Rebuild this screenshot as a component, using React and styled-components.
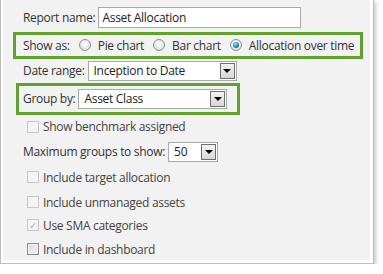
import React from 'react'
import styled, { createGlobalStyle } from 'styled-components'

const Global = createGlobalStyle`
  html, body {
    margin: 0;
    padding: 0;
    background: #ffffff;
  }
  body {
    font-family: 'Open Sans', 'Noto Sans', sans-serif;
    font-size: 12px;
    letter-spacing: -0.3px;
    color: #333333;
  }
`

const Panel = styled.div`
  width: 374px;
  border: 1px solid #bdbdbd;
  border-top: none;
  background: #ffffff;
  padding: 0 3px 3px 2px;
  box-sizing: border-box;
  box-shadow: 2px 2px 4px rgba(0, 0, 0, 0.22);
`

const Inner = styled.div`
  background: #f2f2f2;
  height: 260px;
  padding: 7px 0 0 0;
  box-sizing: border-box;
  display: flex;
  flex-direction: column;
`

const Row = styled.div`
  display: flex;
  align-items: center;
  height: ${(p) => p.$h || 22}px;
  padding-left: ${(p) => p.$indent || 20}px;
  margin-top: ${(p) => p.$mt || 0}px;
  gap: ${(p) => p.$gap ?? 3}px;
`

const Highlight = styled.div`
  display: flex;
  align-items: center;
  border: 3px solid #61a22d;
  height: ${(p) => p.$h}px;
  width: ${(p) => p.$w}px;
  margin-left: ${(p) => p.$ml}px;
  margin-top: ${(p) => p.$mt || 0}px;
  padding-left: ${(p) => p.$pl}px;
  box-sizing: border-box;
  gap: 3px;
`

const Label = styled.span`
  white-space: nowrap;
  color: ${(p) => (p.$muted ? '#444' : '#333')};
`

const TextInput = styled.div`
  width: ${(p) => p.$w}px;
  height: 21px;
  border: 1px solid #a9a9a9;
  background: #fff;
  box-sizing: border-box;
  display: flex;
  align-items: center;
  padding-left: 3px;
  color: #222;
`

const SelectBox = styled.div`
  width: ${(p) => p.$w}px;
  height: ${(p) => p.$h || 20}px;
  border: 1px solid #a9a9a9;
  background: #fff;
  box-sizing: border-box;
  display: flex;
  align-items: center;
  justify-content: space-between;
  padding: 1px;
  padding-left: 5px;
  color: #222;
`

const DropButton = styled.div`
  width: 15px;
  height: 100%;
  box-sizing: border-box;
  border: 1px solid #6f6f6f;
  background: linear-gradient(#f4f4f4, #d6d6d6);
  display: flex;
  align-items: center;
  justify-content: center;
  &::after {
    content: '';
    border-left: 4px solid transparent;
    border-right: 4px solid transparent;
    border-top: 4px solid #000;
    margin-top: 1px;
  }
`

const Radio = styled.span`
  width: 12px;
  height: 12px;
  border-radius: 50%;
  box-sizing: border-box;
  border: 1px solid #8e8f8f;
  background: radial-gradient(circle at 50% 40%, #ffffff 0%, #e6e6e6 60%, #c9c9c9 100%);
  display: inline-flex;
  align-items: center;
  justify-content: center;
  margin: 0 4px 0 6px;
  &::after {
    content: '';
    display: ${(p) => (p.$checked ? 'block' : 'none')};
    width: 6px;
    height: 6px;
    border-radius: 50%;
    background: radial-gradient(circle at 40% 35%, #9fe0ff 0%, #1a8fd6 50%, #0b4f86 100%);
  }
`

const Check = styled.span`
  width: 12px;
  height: 12px;
  box-sizing: border-box;
  border: 1px solid ${(p) => (p.$enabled ? '#8a8a8a' : '#c6c6c6')};
  background: ${(p) =>
    p.$enabled ? 'linear-gradient(135deg, #dcdcdc, #f4f4f4)' : '#f4f4f4'};
  box-shadow: ${(p) => (p.$enabled ? 'inset 0 0 0 1px #f4f4f4' : 'none')};
  display: inline-flex;
  align-items: center;
  justify-content: center;
  color: #b0b0b0;
  font-size: 10px;
  line-height: 1;
  margin-right: 4px;
`

const CheckRow = ({ label, checked, enabled, mt }) => (
  <Row $indent={24} $mt={mt} $gap={0} $h={22}>
    <Check $enabled={enabled}>{checked ? '✓' : ''}</Check>
    <Label $muted>{label}</Label>
  </Row>
)

const App = () => {
  return (
    <>
      <Global />
      <Panel>
        <Inner>
          <Row $h={21}>
            <Label>Report name:</Label>
            <TextInput $w={203}>Asset Allocation</TextInput>
          </Row>
          <Highlight $h={27} $w={350} $ml={10} $mt={4} $pl={7}>
            <Label>Show as:</Label>
            <Radio />
            <Label>Pie chart</Label>
            <Radio />
            <Label>Bar chart</Label>
            <Radio $checked />
            <Label>Allocation over time</Label>
          </Highlight>
          <Row $h={20} $mt={2}>
            <Label>Date range:</Label>
            <SelectBox $w={149}>
              <span>Inception to Date</span>
              <DropButton />
            </SelectBox>
          </Row>
          <Highlight $h={32} $w={224} $ml={13} $mt={2} $pl={4}>
            <Label>Group by:</Label>
            <SelectBox $w={149}>
              <span>Asset Class</span>
              <DropButton />
            </SelectBox>
          </Highlight>
          <CheckRow label="Show benchmark assigned" mt={1} />
          <Row $h={20} $mt={4}>
            <Label>Maximum groups to show:</Label>
            <SelectBox $w={50}>
              <span>50</span>
              <DropButton />
            </SelectBox>
          </Row>
          <CheckRow label="Include target allocation" mt={5} />
          <CheckRow label="Include unmanaged assets" mt={3} />
          <CheckRow label="Use SMA categories" checked mt={1} />
          <CheckRow label="Include in dashboard" enabled mt={2} />
        </Inner>
      </Panel>
    </>
  )
}

export default App
